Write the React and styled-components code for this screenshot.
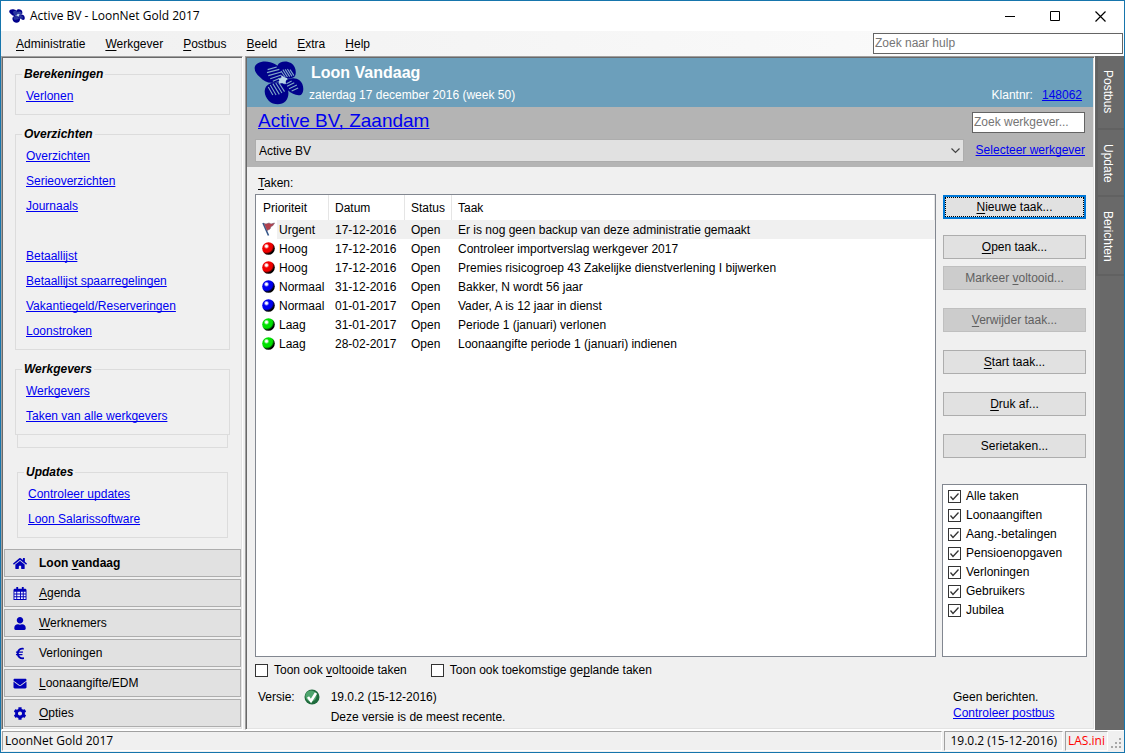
import React from 'react';
import styled, { createGlobalStyle, css } from 'styled-components';
import { FaHome, FaUser, FaEuroSign, FaEnvelope, FaCog } from 'react-icons/fa';

const Global = createGlobalStyle`
  *, *::before, *::after { box-sizing: border-box; }
  body {
    margin: 0;
    background: #f0f0f0;
    color: #000;
    font: 12px/16px "Liberation Sans", Arial, sans-serif;
  }
  button, input, select { font: inherit; color: inherit; margin: 0; border-radius: 0; }
  u { text-decoration-skip-ink: none; text-underline-offset: 2px; }
`;

const Window = styled.div`
  min-height: 100vh;
  display: flex;
  flex-direction: column;
  border: 1px solid #1675ac;
`;

/* Title bar */
const TitleBar = styled.header`
  display: flex;
  align-items: center;
  height: 30px;
  padding: 0 1px 0 8px;
  background: #fff;
`;
const Title = styled.h1`
  flex: 1;
  margin: 0 0 0 5px;
  font: 12px/16px "Open Sans", "Noto Sans", sans-serif;
`;
const WindowButton = styled.button`
  display: grid;
  place-items: center;
  width: 45px;
  height: 28px;
  padding: 0;
  border: 0;
  background: none;
`;

/* Menu bar */
const MenuBar = styled.nav`
  display: flex;
  align-items: center;
  height: 25px;
  padding: 0 1px 0 15px;
  background: linear-gradient(to right, #f0f0f0, #fcfcfc);
`;
const MenuList = styled.div`
  flex: 1;
  display: flex;
  gap: 20px;
`;
const MenuItem = styled.button`
  padding: 0;
  border: 0;
  background: none;
`;
const SearchBox = styled.input`
  width: ${(p) => p.$width};
  height: 21px;
  padding: 0 1px 1px;
  border: 1px solid #646464;
  background: #fff;
  &::placeholder { color: #757575; opacity: 1; }
`;

/* Body */
const Body = styled.div`
  flex: 1;
  display: flex;
  gap: 2px;
`;
const sunken = css`
  border: 1px solid;
  border-color: #a0a0a0 #fff #fff #a0a0a0;
  box-shadow: inset 1px 1px 0 #696969, inset -1px -1px 0 #e3e3e3;
`;
const Sidebar = styled.aside`
  ${sunken}
  flex: 0 0 242px;
  display: flex;
  flex-direction: column;
  padding: 9px 1px 2px 2px;
`;
const Groups = styled.div`
  flex: 1;
  display: flex;
  flex-direction: column;
  gap: 11px;
  padding: 0 11px;
`;
const Indented = styled.div`
  padding: 0 2px;
`;
const Group = styled.fieldset`
  margin: 0;
  padding: 2px 10px 5px;
  border: 1px solid #dcdcdc;
  display: flex;
  flex-direction: column;
  align-items: flex-start;
`;
const GroupTitle = styled.legend`
  margin-left: -4px;
  padding: 0 2px;
  font-weight: bold;
  font-style: italic;
`;
const EmptyGroup = styled.div`
  height: 13px;
  margin: -11px 2px 5px;
  border: 1px solid #dcdcdc;
  border-top: 0;
`;
const Link = styled.a`
  color: #0000f0;
  text-decoration: underline;
  text-decoration-skip-ink: none;
  text-underline-offset: 1px;
  font-size: ${(p) => (p.$large ? '19px' : '12px')};
`;
const GroupLink = styled(Link)`
  line-height: 25px;
  margin-top: ${(p) => (p.$spaced ? '25px' : '0')};
`;
const NavList = styled.nav`
  display: flex;
  flex-direction: column;
  gap: 2px;
  margin-top: 11px;
`;
const NavButton = styled.button`
  display: flex;
  align-items: center;
  gap: 12px;
  height: 28px;
  padding: 0 8px;
  border: 1px solid #adadad;
  background: #e1e1e1;
  font-weight: ${(p) => (p.$active ? 'bold' : 'normal')};
  svg { flex: none; width: 14px; height: 13px; color: #0000b8; }
`;

const Main = styled.main`
  ${sunken}
  flex: 1;
  min-width: 0;
  display: flex;
  flex-direction: column;
  padding: 1px;
`;
const Banner = styled.section`
  display: flex;
  align-items: flex-end;
  height: 49px;
  padding: 0 11px 4px 7px;
  background: #6c9fbb;
  color: #fff;
`;
const BannerLogo = styled.div`
  align-self: center;
  height: 44px;
  margin-top: 4px;
`;
const BannerText = styled.div`
  flex: 1;
  align-self: flex-start;
  padding-left: 5px;
`;
const BannerTitle = styled.h2`
  margin: 6px 0 5px 2px;
  font-size: 16px;
  line-height: 18px;
`;
const BannerDate = styled.div`
  font-size: 12px;
`;
const Customer = styled.div`
  display: flex;
  gap: 9px;
`;
const Employer = styled.section`
  display: grid;
  grid-template-columns: minmax(0, 1fr) 113px;
  grid-template-rows: 25px 23px;
  gap: 4px 8px;
  align-items: center;
  height: 60px;
  padding: 3px 8px 4px 8px;
  background: #b4b4b4;
`;
const EmployerName = styled.div`
  padding: 0 0 2px 3px;
  line-height: 22px;
`;
const RightLink = styled.div`
  padding-bottom: 2px;
  text-align: right;
`;
const SelectWrap = styled.div`
  display: grid;
  align-items: center;
  > * { grid-area: 1 / 1; }
  svg { justify-self: end; margin-right: 4px; pointer-events: none; }
`;
const Select = styled.select`
  appearance: none;
  width: 100%;
  height: 23px;
  padding: 0 24px 0 3px;
  border: 1px solid #adadad;
  background: #e1e1e1;
`;

const Content = styled.section`
  flex: 1;
  display: flex;
  flex-direction: column;
  padding: 8px 6px 3px 8px;
`;
const TasksLabel = styled.div`
  padding: 0 0 3px 3px;
`;
const Columns = styled.div`
  flex: 1;
  display: flex;
  gap: 6px;
`;
const TableFrame = styled.div`
  flex: 1;
  min-width: 0;
  border: 1px solid #828790;
  background: #fff;
`;
const Table = styled.table`
  width: 100%;
  border-collapse: separate;
  border-spacing: 0;
  table-layout: fixed;
`;
const Th = styled.th`
  width: ${(p) => p.$width};
  height: 25px;
  padding: 0 6px;
  border-right: 1px solid #e5e5e5;
  font-weight: normal;
  text-align: left;
  &:first-child { padding-left: 7px; }
`;
const Td = styled.td`
  height: 19px;
  padding: 1px 6px 0;
  line-height: 18px;
  white-space: nowrap;
  background: ${(p) => (p.$selected ? '#f0f0f0' : '#fff')};
`;
const Priority = styled.div`
  display: flex;
  align-items: center;
  gap: 4px;
  svg { flex: none; margin-bottom: 2px; }
`;
const PriorityCell = styled(Td)`
  padding: 1px 0 0 6px;
  background: ${(p) => (p.$selected ? 'linear-gradient(to right, #fff 21px, #f0f0f0 21px)' : '#fff')};
`;

const Actions = styled.div`
  flex: 0 0 145px;
  display: flex;
  flex-direction: column;
`;
const ButtonStack = styled.div`
  display: flex;
  flex-direction: column;
  gap: ${(p) => p.$gap};
`;
const ActionButtons = styled(ButtonStack)`
  padding: 1px 1px 0;
`;
const Button = styled.button`
  height: 24px;
  padding: 0;
  border: 1px solid #adadad;
  background: #e1e1e1;
  ${(p) => p.$primary && css`
    border: 2px solid #0078d7;
    outline: 1px dotted #000;
    outline-offset: -3px;
  `}
  &:disabled { border-color: #bfbfbf; background: #cccccc; color: #606060; }
`;
const Filters = styled.div`
  flex: 1;
  margin-top: 26px;
  padding: 2px 5px;
  border: 1px solid #828790;
  background: #fff;
`;
const CheckLabel = styled.label`
  display: flex;
  align-items: center;
  gap: ${(p) => p.$gap};
  line-height: 19px;
`;
const CheckWrap = styled.span`
  display: grid;
  > * { grid-area: 1 / 1; }
  svg { pointer-events: none; display: none; }
  input:checked + svg { display: block; }
`;
const CheckInput = styled.input`
  appearance: none;
  width: 13px;
  height: 13px;
  border: 1px solid #333;
  background: #fff;
`;
const Options = styled.div`
  display: flex;
  gap: 24px;
  padding-top: 4px;
`;
const Footer = styled.footer`
  display: flex;
  justify-content: space-between;
  padding: 9px 0 0 3px;
`;
const Version = styled.div`
  display: grid;
  grid-template-columns: auto auto auto;
  column-gap: 9px;
  row-gap: 4px;
  align-items: center;
  svg { display: block; }
`;
const VersionText = styled.div`
  grid-column: 3;
  padding-left: 2px;
`;
const Messages = styled.div`
  width: 134px;
`;

const SideTabs = styled.div`
  flex: 0 0 29px;
  margin-left: -2px;
  padding-left: 1px;
  display: flex;
  flex-direction: column;
  background: #696969;
`;
const SideTab = styled.button`
  writing-mode: vertical-rl;
  padding: 14px 6px 14px 0;
  border: 2px solid #616161;
  border-width: 0 0 2px 2px;
  background: none;
  color: #fff;
  text-align: left;
  height: ${(p) => p.$height};
`;

const StatusBar = styled.footer`
  display: flex;
  align-items: stretch;
  gap: 2px;
  height: 22px;
  padding: 0 0 1px 1px;
  border-top: 1px solid #fff;
  font: 12px/18px "Open Sans", "Noto Sans", sans-serif;
`;
const StatusCell = styled.div`
  flex: ${(p) => p.$flex};
  padding: 0 ${(p) => (p.$tight ? '2px' : '5px')};
  border: 1px solid;
  border-color: #a0a0a0 #fff #fff #a0a0a0;
  color: ${(p) => (p.$alert ? '#f00' : '#000')};
  white-space: nowrap;
`;
const StatusText = styled(StatusCell)`
  padding-left: 2px;
`;
const Grip = styled.svg`
  align-self: flex-end;
  flex: none;
`;

const Logo = ({ width, height }) => (
  <svg width={width} height={height} viewBox="10 10 154 132" preserveAspectRatio="none" aria-hidden="true">
    <g fill="#00008b">
      <path d="M12 32C12 14 40 8 60 14C80 20 96 32 98 46C100 60 92 70 80 72C62 80 42 74 28 58C18 50 12 42 12 32Z" />
      <path d="M82 24C88 10 110 8 124 16C138 24 142 44 136 56C128 64 106 66 96 58C84 48 76 36 82 24Z" />
      <path d="M106 70C116 60 140 58 150 68C164 78 166 104 154 112C142 116 126 108 114 98C104 88 100 78 106 70Z" />
      <path d="M48 86C60 72 92 70 106 82C118 92 120 116 108 130C94 144 70 142 56 130C44 118 38 100 48 86Z" />
    </g>
    <path fill="#b9d7ea" d="M94 52L103 58L113 62L108 70L108 80L98 76L86 78L88 68L84 62L94 60Z" />
    <g stroke="#7fa9c8" strokeWidth="3.4" fill="none">
      <path d="M52 36L80 28M50 45L88 35M54 54L94 43M60 63L94 52M68 71L92 61" />
      <path d="M93 40L106 58M99 36L113 58M106 35L120 57M113 34L127 56M121 36L133 54" />
      <path d="M110 78L126 70M112 86L134 75M118 93L142 82M126 100L146 91" />
      <path d="M54 88L68 112M60 82L78 112M68 78L88 110M77 76L96 106M87 76L104 102" />
    </g>
  </svg>
);

const Flag = () => (
  <svg width="13" height="14" viewBox="0 0 13 14" aria-hidden="true">
    <path d="M1 1L6.5 13.5" stroke="#34578a" strokeWidth="1.6" />
    <path d="M2 1.5L4 2L7 1L9 2L12.5 1L11 3.5L9 4.5L8 7L5 8.5Z" fill="#b5404c" stroke="#7b5a70" strokeWidth="0.6" />
  </svg>
);
const Ball = ({ color }) => (
  <svg width="13" height="13" viewBox="0 0 13 13" aria-hidden="true">
    <defs>
      <radialGradient id={`ball-${color.slice(1)}`} cx="0.34" cy="0.32" r="0.72">
        <stop offset="0" stopColor="#fff" />
        <stop offset="0.1" stopColor="#fff" />
        <stop offset="0.3" stopColor={color} />
        <stop offset="0.65" stopColor={color} />
        <stop offset="0.88" stopColor="#000" />
      </radialGradient>
    </defs>
    <circle cx="6.5" cy="6.5" r="6.3" fill={`url(#ball-${color.slice(1)})`} />
  </svg>
);
const Calendar = () => (
  <svg viewBox="0 0 14 14" aria-hidden="true">
    <path fill="currentColor" d="M1 2H3V0H5V2H9V0H11V2H13L14 3V14H0V3Z" />
    <path fill="#f4f4ff" d="M1 5h2v2H1zM4 5h3v2H4zM8 5h2v2H8zM11 5h2v2h-2zM1 8h2v2H1zM4 8h3v2H4zM8 8h2v2H8zM11 8h2v2h-2zM1 11h2v2H1zM4 11h3v2H4zM8 11h2v2H8zM11 11h2v2h-2z" />
  </svg>
);
const VersionOk = () => (
  <svg width="16" height="16" viewBox="0 0 16 16" aria-hidden="true">
    <circle cx="8" cy="8" r="7.5" fill="#1f6b3c" />
    <circle cx="7" cy="7" r="5.6" fill="#4fa56e" />
    <path d="M4 8L7 12L12 4" fill="none" stroke="#fff" strokeWidth="2.6" />
  </svg>
);

const Check = ({ children, checked, gap = '5px' }) => (
  <CheckLabel $gap={gap}>
    <CheckWrap>
      <CheckInput type="checkbox" defaultChecked={checked} />
      <svg width="13" height="13" viewBox="0 0 13 13"><path d="M2.5 6.5L5 9.5L10.5 3.5" fill="none" stroke="#333" strokeWidth="1.3" /></svg>
    </CheckWrap>
    <span>{children}</span>
  </CheckLabel>
);

/* Renders a caption with its access key underlined. */
const Caption = ({ text }) => {
  const [before, rest] = text.includes('&') ? text.split('&') : [text, ''];
  return <span>{before}{rest && <u>{rest[0]}</u>}{rest.slice(1)}</span>;
};

const menu = ['&Administratie', '&Werkgever', '&Postbus', '&Beeld', '&Extra', '&Help'];
const groups = [
  ['Berekeningen', ['Verlonen']],
  ['Overzichten', ['Overzichten', 'Serieoverzichten', 'Journaals', 'Betaallijst', 'Betaallijst spaarregelingen', 'Vakantiegeld/Reserveringen', 'Loonstroken']],
  ['Werkgevers', ['Werkgevers', 'Taken van alle werkgevers']],
];
const updates = ['Updates', ['Controleer updates', 'Loon Salarissoftware']];
const nav = [
  ['Loon &vandaag', FaHome],
  ['&Agenda', Calendar],
  ['&Werknemers', FaUser],
  ['Verloningen', FaEuroSign],
  ['&Loonaangifte/EDM', FaEnvelope],
  ['&Opties', FaCog],
];
const ballColors = { Hoog: '#f00000', Normaal: '#0000f0', Laag: '#00e000' };
const tasks = [
  ['Urgent', '17-12-2016', 'Er is nog geen backup van deze administratie gemaakt'],
  ['Hoog', '17-12-2016', 'Controleer importverslag werkgever 2017'],
  ['Hoog', '17-12-2016', 'Premies risicogroep 43 Zakelijke dienstverlening I bijwerken'],
  ['Normaal', '31-12-2016', 'Bakker, N wordt 56 jaar'],
  ['Normaal', '01-01-2017', 'Vader, A is 12 jaar in dienst'],
  ['Laag', '31-01-2017', 'Periode 1 (januari) verlonen'],
  ['Laag', '28-02-2017', 'Loonaangifte periode 1 (januari) indienen'],
];
const filters = ['Alle taken', 'Loonaangiften', 'Aang.-betalingen', 'Pensioenopgaven', 'Verloningen', 'Gebruikers', 'Jubilea'];

const LinkGroup = ({ group: [title, links] }) => (
  <Group>
    <GroupTitle>{title}</GroupTitle>
    {links.map((l) => <GroupLink key={l} href="#" $spaced={l === 'Betaallijst'}>{l}</GroupLink>)}
  </Group>
);

export default function App() {
  return (
    <>
      <Global />
      <Window>
        <TitleBar>
          <Logo width={16} height={14} />
          <Title>Active BV - LoonNet Gold 2017</Title>
          <WindowButton aria-label="Minimaliseren">
            <svg width="11" height="11"><path d="M0 5.5H10" stroke="#000" /></svg>
          </WindowButton>
          <WindowButton aria-label="Maximaliseren">
            <svg width="11" height="11"><path d="M.5 .5H9.5V9.5H.5Z" fill="none" stroke="#000" /></svg>
          </WindowButton>
          <WindowButton aria-label="Sluiten">
            <svg width="11" height="11"><path d="M.5 .5L10.5 10.5M10.5 .5L.5 10.5" stroke="#000" strokeWidth="1.2" /></svg>
          </WindowButton>
        </TitleBar>

        <MenuBar>
          <MenuList>
            {menu.map((m) => <MenuItem key={m}><Caption text={m} /></MenuItem>)}
          </MenuList>
          <SearchBox $width="250px" placeholder="Zoek naar hulp" aria-label="Zoek naar hulp" />
        </MenuBar>

        <Body>
          <Sidebar>
            <Groups>
              {groups.map((g) => <LinkGroup key={g[0]} group={g} />)}
              <EmptyGroup />
              <Indented><LinkGroup group={updates} /></Indented>
            </Groups>
            <NavList>
              {nav.map(([text, Icon], i) => (
                <NavButton key={text} $active={i === 0}><Icon /><Caption text={text} /></NavButton>
              ))}
            </NavList>
          </Sidebar>

          <Main>
            <Banner>
              <BannerLogo><Logo width={50} height={44} /></BannerLogo>
              <BannerText>
                <BannerTitle>Loon Vandaag</BannerTitle>
                <BannerDate>zaterdag 17 december 2016 (week 50)</BannerDate>
              </BannerText>
              <Customer><span>Klantnr:</span><Link href="#">148062</Link></Customer>
            </Banner>
            <Employer>
              <EmployerName><Link href="#" $large>Active BV, Zaandam</Link></EmployerName>
              <SearchBox $width="100%" placeholder="Zoek werkgever..." aria-label="Zoek werkgever" />
              <SelectWrap>
                <Select aria-label="Werkgever" defaultValue="Active BV"><option>Active BV</option></Select>
                <svg width="9" height="6"><path d="M.5 .5L4.5 4.5L8.5 .5" fill="none" stroke="#444" strokeWidth="1.2" /></svg>
              </SelectWrap>
              <RightLink><Link href="#">Selecteer werkgever</Link></RightLink>
            </Employer>

            <Content>
              <TasksLabel><Caption text="&Taken:" /></TasksLabel>
              <Columns>
                <TableFrame>
                  <Table>
                    <thead>
                      <tr>
                        <Th $width="73px">Prioriteit</Th>
                        <Th $width="76px">Datum</Th>
                        <Th $width="47px">Status</Th>
                        <Th $width="auto">Taak</Th>
                      </tr>
                    </thead>
                    <tbody>
                      {tasks.map(([priority, date, task], i) => (
                        <tr key={task}>
                          <PriorityCell $selected={i === 0}>
                            <Priority>
                              {priority === 'Urgent' ? <Flag /> : <Ball color={ballColors[priority]} />}
                              {priority}
                            </Priority>
                          </PriorityCell>
                          <Td $selected={i === 0}>{date}</Td>
                          <Td $selected={i === 0}>Open</Td>
                          <Td $selected={i === 0}>{task}</Td>
                        </tr>
                      ))}
                    </tbody>
                  </Table>
                </TableFrame>
                <Actions>
                  <ActionButtons $gap="18px">
                    <ButtonStack $gap="16px">
                      <Button $primary><Caption text="&Nieuwe taak..." /></Button>
                      <ButtonStack $gap="7px">
                        <Button><Caption text="&Open taak..." /></Button>
                        <Button disabled><Caption text="Markeer &voltooid..." /></Button>
                      </ButtonStack>
                    </ButtonStack>
                    <Button disabled><Caption text="&Verwijder taak..." /></Button>
                    <Button><Caption text="&Start taak..." /></Button>
                    <Button><Caption text="&Druk af..." /></Button>
                    <Button>Serietaken...</Button>
                  </ActionButtons>
                  <Filters>
                    {filters.map((f) => <Check key={f} checked>{f}</Check>)}
                  </Filters>
                </Actions>
              </Columns>
              <Options>
                <Check gap="6px"><Caption text="Toon ook &voltooide taken" /></Check>
                <Check gap="6px"><Caption text="Toon ook toekomstige ge&plande taken" /></Check>
              </Options>
              <Footer>
                <Version>
                  <span>Versie:</span>
                  <VersionOk />
                  <VersionText>19.0.2 (15-12-2016)</VersionText>
                  <VersionText>Deze versie is de meest recente.</VersionText>
                </Version>
                <Messages>
                  <div>Geen berichten.</div>
                  <Link href="#">Controleer postbus</Link>
                </Messages>
              </Footer>
            </Content>
          </Main>

          <SideTabs>
            <SideTab $height="74px">Postbus</SideTab>
            <SideTab $height="67px">Update</SideTab>
            <SideTab $height="79px">Berichten</SideTab>
          </SideTabs>
        </Body>

        <StatusBar>
          <StatusText $flex="1">LoonNet Gold 2017</StatusText>
          <StatusCell $flex="0 0 114px">19.0.2 (15-12-2016)</StatusCell>
          <StatusCell $flex="0 0 43px" $tight $alert>LAS.ini</StatusCell>
          <Grip width="14" height="14" aria-hidden="true">
            <path fill="#a8a8a8" d="M9 1h2v2H9zM5 5h2v2H5zM9 5h2v2H9zM1 9h2v2H1zM5 9h2v2H5zM9 9h2v2H9z" />
          </Grip>
        </StatusBar>
      </Window>
    </>
  );
}
